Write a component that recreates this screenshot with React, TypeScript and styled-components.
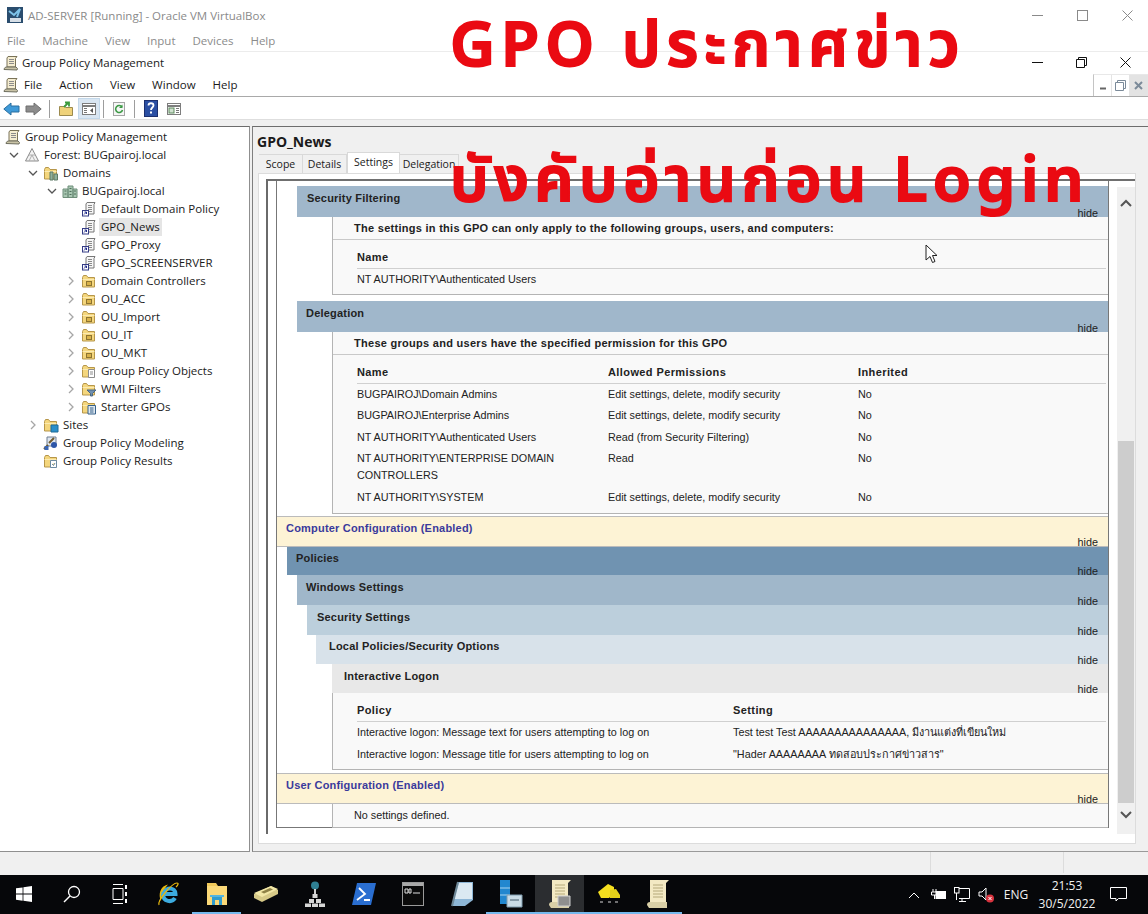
import styled, { createGlobalStyle } from "styled-components";
import { ReactNode } from "react";

const GlobalStyle = createGlobalStyle`
  html, body { margin: 0; padding: 0; background: #fff; }
  * { box-sizing: border-box; }
`;

const Screen = styled.div`
  position: relative;
  width: 1148px;
  height: 914px;
  overflow: hidden;
  display: flex;
  flex-direction: column;
  background: #fff;
  font-family: "Open Sans", "Noto Sans", sans-serif;
  font-size: 11.5px;
  color: #1a1a1a;
`;

const Headline = styled.div<{ $top: number; $spacing: number }>`
  position: absolute;
  left: 450px;
  top: ${(p) => p.$top}px;
  font-family: "Noto Sans", "Noto Sans Thai", "Lato", sans-serif;
  font-size: 62px;
  font-weight: 600;
  line-height: 1.2;
  letter-spacing: ${(p) => p.$spacing}px;
  white-space: nowrap;
  color: #ea0a12;
  -webkit-text-stroke: 2px #ea0a12;
`;

const Pointer = styled.svg`
  position: absolute;
  left: 925px;
  top: 244px;
`;

const TitleBar = styled.div<{ $h: number; $muted?: boolean }>`
  height: ${(p) => p.$h}px;
  display: flex;
  align-items: center;
  padding-left: ${(p) => (p.$muted ? 7 : 3)}px;
  gap: ${(p) => (p.$muted ? 5 : 3)}px;
  color: ${(p) => (p.$muted ? "#8a8a8a" : "#1a1a1a")};
`;

const WinButtons = styled.div<{ $gap: number; $right: number }>`
  margin-left: auto;
  margin-right: ${(p) => p.$right}px;
  display: flex;
  gap: ${(p) => p.$gap}px;
  align-items: center;
`;

const GuestMenu = styled.div`
  height: 22px;
  display: flex;
  gap: 17px;
  align-items: center;
  padding: 0 0 0 7px;
  color: #8b8b8b;
  border-bottom: 1px solid #ececec;
`;

const MenuBar = styled.div`
  height: 24px;
  display: flex;
  align-items: center;
  padding-left: 3px;
  border-bottom: 1px solid #a9a9a9;
`;

const MenuItem = styled.span<{ $first?: boolean }>`
  margin-left: ${(p) => (p.$first ? 5 : 17)}px;
`;

const MdiButtons = styled.div`
  margin-left: auto;
  align-self: flex-end;
  width: 55px;
  height: 22px;
  display: flex;
  border-left: 1px solid #c4c4c4;
  border-top: 1px solid #e8e8e8;
`;

const MdiButton = styled.div<{ $shade?: boolean }>`
  flex: 1;
  display: flex;
  align-items: center;
  justify-content: center;
  border-right: 1px solid #e4e4e4;
  background: ${(p) => (p.$shade ? "#e3e3e3" : "#fff")};
`;

const Toolbar = styled.div`
  height: 23px;
  display: flex;
  align-items: center;
  padding: 1px 0 0 3px;
  border-bottom: 1px solid #dedede;
`;

const ToolButton = styled.div<{ $active?: boolean; $w: number }>`
  width: ${(p) => p.$w}px;
  height: 21px;
  display: flex;
  align-items: center;
  justify-content: center;
  background: ${(p) => (p.$active ? "#d9e6f2" : "transparent")};
  border: 1px solid ${(p) => (p.$active ? "#c3d8ea" : "transparent")};
`;

const ToolSep = styled.div`
  width: 1px;
  height: 18px;
  margin: 0 3px;
  background: #9d9d9d;
`;

const Workspace = styled.div`
  height: 732px;
  padding-top: 6px;
  display: flex;
  gap: 2px;
  background: #f0f0f0;
`;

const TreePane = styled.div`
  width: 250px;
  padding-top: 1px;
  background: #fff;
  border-top: 1px solid #6d6d6d;
  border-right: 1px solid #8f8f8f;
  border-bottom: 1px solid #8f8f8f;
`;

const TreeRow = styled.div<{ $level: number }>`
  height: 18px;
  display: flex;
  align-items: center;
  padding-left: ${(p) => (p.$level === 0 ? 1 : 7 + (p.$level - 1) * 19)}px;
  white-space: nowrap;
`;

const Chevron = styled.span`
  width: 13px;
  height: 18px;
  display: flex;
  align-items: center;
  justify-content: center;
  flex: none;
`;

const NodeIcon = styled.span`
  width: 18px;
  height: 18px;
  margin-left: 3px;
  flex: none;
  display: flex;
  align-items: center;
  justify-content: center;
`;

const NodeLabel = styled.span<{ $selected?: boolean }>`
  margin-left: 1px;
  padding: 0 2px;
  height: 18px;
  line-height: 18px;
  background: ${(p) => (p.$selected ? "#e5e5e5" : "transparent")};
`;

const DetailPane = styled.div`
  flex: 1;
  min-width: 0;
  display: flex;
  flex-direction: column;
  border: 1px solid #9a9a9a;
  border-top-color: #6d6d6d;
  border-left-color: #7f7f7f;
  border-right: none;
`;

const PaneTitle = styled.div`
  height: 26px;
  padding: 5px 0 0 4px;
  font-size: 14px;
  font-weight: 700;
  line-height: 19px;
`;

const Tabs = styled.div`
  height: 20px;
  display: flex;
  align-items: flex-end;
  padding-left: 6px;
`;

const Tab = styled.div<{ $active?: boolean; $w: number }>`
  width: ${(p) => p.$w}px;
  height: ${(p) => (p.$active ? 21 : 19)}px;
  display: flex;
  align-items: ${(p) => (p.$active ? "flex-start" : "center")};
  justify-content: center;
  font-size: 10.5px;
  line-height: 18px;
  background: ${(p) => (p.$active ? "#fff" : "#f0f0f0")};
  border: 1px solid #d9d9d9;
  border-bottom: none;
  border-left: ${(p) => (p.$active ? "1px solid #d9d9d9" : "none")};
`;

const TabBody = styled.div`
  height: 671px;
  margin-left: 5px;
  margin-right: 12px;
  padding: 5px 0 9px 7px;
  display: flex;
  background: #fff;
  border: 1px solid #dcdcdc;
`;

const ReportFrame = styled.div`
  flex: 1;
  min-width: 0;
  overflow: hidden;
  border-top: 2px solid #6f6f6f;
  border-left: 2px solid #6a6a6a;
  padding-left: 8px;
  display: flex;
`;

const Report = styled.div`
  width: 834px;
  height: 647px;
  padding-top: 5px;
  align-self: flex-start;
  border-left: 1px solid #777;
  border-right: 1px solid #777;
  border-bottom: 1px solid #777;
  font-family: "Liberation Sans", Arial, sans-serif;
  font-size: 10.8px;
  color: #222;
`;

const Head = styled.div<{ $indent: number; $bg: string; $h: number; $gap: number; $blue?: boolean; $pt: number; $pl: number }>`
  height: ${(p) => p.$h}px;
  margin-left: ${(p) => p.$indent}px;
  margin-top: ${(p) => p.$gap}px;
  background: ${(p) => p.$bg};
  display: flex;
  justify-content: space-between;
  padding: ${(p) => p.$pt}px 10px 0 ${(p) => p.$pl}px;
  border-top: ${(p) => (p.$blue ? "1px solid #bbb" : "none")};
  border-bottom: ${(p) => (p.$blue ? "1px solid #bbb" : "none")};
`;

const HeadTitle = styled.span<{ $blue?: boolean }>`
  font-weight: 700;
  font-size: 11px;
  line-height: 14px;
  letter-spacing: 0.2px;
  color: ${(p) => (p.$blue ? "#3a3a9c" : "#222")};
`;

const HideLink = styled.span`
  align-self: flex-end;
  margin-bottom: -3px;
  font-size: 10.8px;
  line-height: 13px;
  color: #222;
`;

const Block = styled.div<{ $pb: number }>`
  margin-left: 55px;
  padding-bottom: ${(p) => p.$pb}px;
  background: #f9f9f9;
  border-left: 1px solid #b4b4b4;
  border-bottom: 1px solid #b4b4b4;
`;

const Intro = styled.div`
  height: 23px;
  padding: 4px 0 0 21px;
  font-size: 11px;
  font-weight: 700;
  line-height: 14px;
  letter-spacing: 0.28px;
  border-bottom: 1px solid #c9c9c9;
`;

const TableHead = styled.div<{ $cols: string }>`
  display: grid;
  grid-template-columns: ${(p) => p.$cols};
  margin: 0 2px 0 24px;
  padding: 10px 0 4px;
  font-size: 11px;
  font-weight: 700;
  line-height: 14px;
  letter-spacing: 0.4px;
  border-bottom: 1px solid #d0d0d0;
`;

const TableRow = styled.div<{ $cols: string }>`
  display: grid;
  grid-template-columns: ${(p) => p.$cols};
  margin: 0 2px 0 24px;
  padding: 2px 0 2.5px;
  line-height: 17px;
`;

const NameCell = styled.span`
  padding-right: 22px;
`;

const PlainText = styled.div`
  height: 23px;
  padding: 4px 0 0 21px;
  line-height: 14px;
`;

const ScrollBar = styled.div`
  width: 18px;
  margin-left: 8px;
  margin-top: 6px;
  background: #f0f0f0;
  display: flex;
  flex-direction: column;
  align-items: center;
`;

const ScrollArrow = styled.div<{ $h: number }>`
  height: ${(p) => p.$h}px;
  display: flex;
  align-items: center;
  justify-content: center;
`;

const ScrollSpace = styled.div`
  height: 222px;
`;

const ScrollThumb = styled.div`
  width: 16px;
  height: 362px;
  background: #cdcdcd;
`;

const StatusBar = styled.div`
  height: 23px;
  display: flex;
  justify-content: flex-end;
  background: #f0f0f0;
  padding-bottom: 2px;
`;

const StatusCell = styled.div<{ $w: number }>`
  width: ${(p) => p.$w}px;
  border-left: 1px solid #dcdcdc;
`;

const Taskbar = styled.div`
  height: 39px;
  display: flex;
  align-items: stretch;
  background: #06070a;
  color: #f2f2f2;
`;

const TaskButton = styled.div<{ $active?: boolean; $open?: boolean; $w?: number }>`
  width: ${(p) => p.$w ?? 49}px;
  flex: none;
  display: flex;
  align-items: center;
  justify-content: center;
  background: ${(p) => (p.$active ? "#2b2d30" : "transparent")};
  border-bottom: 2px solid ${(p) => (p.$open ? "#76b9ed" : "transparent")};
`;

const Tray = styled.div`
  margin-left: auto;
  display: flex;
  align-items: center;
`;

const TrayIcon = styled.span`
  width: 24px;
  display: flex;
  justify-content: center;
`;

const TrayLang = styled.span`
  width: 36px;
  text-align: center;
  font-size: 12px;
`;

const Clock = styled.div`
  width: 66px;
  text-align: center;
  font-size: 12px;
  line-height: 18px;
`;

const Notify = styled.div`
  width: 48px;
  padding-right: 12px;
  display: flex;
  justify-content: center;
`;

/* ---- drawings ---- */

const Svg = ({ w = 16, h = 16, children }: { w?: number; h?: number; children: ReactNode }) => (
  <svg width={w} height={h} viewBox={`0 0 ${w} ${h}`} fill="none">
    {children}
  </svg>
);

const WinMin = ({ c }: { c: string }) => (
  <Svg w={11} h={11}><path d="M0 5.5h11" stroke={c} /></Svg>
);
const WinMax = ({ c }: { c: string }) => (
  <Svg w={11} h={11}><rect x=".5" y=".5" width="10" height="10" stroke={c} /></Svg>
);
const WinRestore = ({ c }: { c: string }) => (
  <Svg w={11} h={11}><path d="M.5 2.5h8v8h-8zM2.5 2.5v-2h8v8h-2" stroke={c} /></Svg>
);
const WinClose = ({ c }: { c: string }) => (
  <Svg w={11} h={11}><path d="M.5.5l10 10M10.5.5l-10 10" stroke={c} /></Svg>
);

const Scroll = () => (
  <Svg>
    <path d="M5 1.500h9l-1.500 2V12H4V3z" fill="#f5edd0" stroke="#7a7358" />
    <path d="M6 4.500h5M6 6.500h5M6 8.500h5" stroke="#8c8c8c" />
    <path d="M1 14.500c0-2 2-2.500 3-2.500h9l1.500 1.500-.5 1.500z" fill="#c9c3a6" stroke="#6e6e5e" />
  </Svg>
);

const VboxLogo = () => (
  <Svg>
    <rect width="16" height="16" fill="#2a4d6e" />
    <path d="M2 4l5 4 6-6-3 8" stroke="#7fc4ea" strokeWidth="2" />
    <rect x="3" y="11" width="11" height="4" fill="#d6dee6" />
  </Svg>
);

const Folder = ({ badge }: { badge?: ReactNode }) => (
  <Svg>
    <path d="M1.500 4.500V14h12V4.500H7L5.500 2.500h-3z" fill="#f4d67d" stroke="#b6964a" />
    <path d="M1.500 6.500h12" stroke="#fbeab1" />
    {badge}
  </Svg>
);

const OuBadge = <rect x="5.500" y="8.500" width="5" height="4" fill="#d9b24a" stroke="#8d7430" />;
const DocBadge = <path d="M7.500 6.500h6v8h-6zM9 9h3M9 11h3" fill="#fff" stroke="#8c8c8c" />;
const FilterBadge = <path d="M6 9h9l-3.500 3.500V15h-2v-2.500z" fill="#6f8fae" stroke="#4a6680" />;
const StarterBadge = <path d="M7 6.500h7.500v8.500H7zM9 9h3.500M9 11h3.500M9 13h3.500" fill="#dfe8f0" stroke="#35608a" />;
const SiteBadge = <path d="M8 8h7v7H8z" fill="#2a8fc9" stroke="#1d6b98" />;
const ResultBadge = <path d="M7.500 7.500h6v7h-6zM9 11l1.500 1.500L12 10" fill="#fff" stroke="#6d8aa3" />;
const DomainsBadge = <path d="M7 7h3v8H7zM11 9h3.500v6H11z" fill="#8fb09a" stroke="#5d7a66" />;

const Forest = () => (
  <Svg>
    <path d="M8 1.500L14.500 14h-13z" fill="#f2f2f2" stroke="#8b8b8b" />
    <path d="M5 8h6M8 8l-3 6M8 8l3 6" stroke="#aeaeae" />
  </Svg>
);

const Domain = () => (
  <Svg>
    <path d="M1 6h5v8.500H1zM6 3h5v11.500H6zM11 6h4v8.500h-4z" fill="#a9c7b2" stroke="#6f8e7a" />
    <path d="M2.500 8h2M2.500 11h2M7.500 5.500h2M7.500 8.500h2M7.500 11.500h2M12 8h2M12 11h2" stroke="#4f6f5b" />
  </Svg>
);

const Gpo = () => (
  <Svg>
    <path d="M6 1.500h8l-1 2V13H5V3z" fill="#f6f6f6" stroke="#777" />
    <path d="M7 4.500h4M7 6.500h4M7 8.500h4M7 10.500h4" stroke="#8a8a8a" />
    <rect x="1.500" y="9.500" width="6" height="5.500" fill="#fff" stroke="#353c85" />
    <path d="M3 13.500l2.500-2.500M3.500 11h2v2" stroke="#1f2a8a" />
  </Svg>
);

const Modeling = () => (
  <Svg>
    <path d="M4 2h9v9H4z" fill="#dfe6ef" stroke="#6e7f94" />
    <path d="M1 14l4-4M6 8l5-5" stroke="#6f5a2c" strokeWidth="2" />
    <circle cx="11" cy="10" r="3" fill="#2d56a8" />
    <path d="M1.500 11h4v4h-4z" fill="#3b66b5" />
  </Svg>
);

const ChevronDown = () => (
  <Svg w={10} h={10}><path d="M1 3l4 4 4-4" stroke="#555" strokeWidth="1.300" /></Svg>
);
const ChevronRight = () => (
  <Svg w={10} h={10}><path d="M3 1l4 4-4 4" stroke="#a6a6a6" strokeWidth="1.300" /></Svg>
);

const Arrow = ({ color, edge, flip }: { color: string; edge: string; flip?: boolean }) => (
  <svg width="17" height="14" viewBox="0 0 17 14" style={flip ? { transform: "scaleX(-1)" } : undefined}>
    <path d="M.800 7L8 1v3h8v6H8v3z" fill={color} stroke={edge} />
  </svg>
);

const UpFolder = () => (
  <Svg>
    <path d="M1.500 5.500V14.500h13V6.500H8L6.500 5.500z" fill="#efd27a" stroke="#9c8a4e" />
    <path d="M6 6l4-4M7 1.500h4v4" stroke="#3c9a3c" strokeWidth="1.800" />
  </Svg>
);

const PaneIcon = ({ right }: { right?: boolean }) => (
  <Svg>
    <rect x="1.500" y="2.500" width="13" height="11" fill="#fff" stroke="#7d7d7d" />
    <path d="M1.500 5h13" stroke="#7d7d7d" strokeWidth="2" />
    {right ? (
      <>
        <rect x="3" y="7" width="5" height="5" fill="#cfe0cf" stroke="#5c8a5c" />
        <path d="M10 7.500h3M10 9.500h3M10 11.500h3" stroke="#777" />
      </>
    ) : (
      <>
        <path d="M3 7.500h3M3 9.500h3M3 11.500h3" stroke="#777" />
        <path d="M12 7l-3 2.500 3 2.500z" fill="#555" />
      </>
    )}
  </Svg>
);

const Refresh = () => (
  <Svg>
    <rect x="2.500" y="1.500" width="11" height="13" fill="#f6f6f6" stroke="#a5a5a5" />
    <path d="M11 6a3.500 3.500 0 1 0 .5 3" stroke="#3d9a46" strokeWidth="1.600" />
    <path d="M11.500 3.500V7H8z" fill="#3d9a46" />
  </Svg>
);

const HelpBook = () => (
  <svg width="14" height="17" viewBox="0 0 14 17">
    <rect x=".5" y=".5" width="13" height="16" fill="#2b4fa3" stroke="#1c2f6e" />
    <path d="M4.500 5.500c0-3 5-3 5 0 0 2-2.500 2-2.500 4.500" fill="none" stroke="#fff" strokeWidth="1.800" />
    <rect x="6" y="11.500" width="2" height="2" fill="#fff" />
  </svg>
);

const WindowsLogo = () => (
  <svg width="16" height="16" viewBox="0 0 16 16" fill="#fff">
    <path d="M0 2.300L6.600 1.400V7.600H0zM7.400 1.300L16 0v7.600H7.400zM0 8.400h6.600v6.300L0 13.700zM7.400 8.400H16V16l-8.600-1.200z" />
  </svg>
);

const SearchGlass = () => (
  <Svg w={18} h={18}>
    <circle cx="11" cy="7" r="5.500" stroke="#fff" strokeWidth="1.300" />
    <path d="M7 11l-6 6" stroke="#fff" strokeWidth="1.500" />
  </Svg>
);

const TaskView = () => (
  <Svg w={16} h={20}>
    <path d="M1 .5h10M1 19.500h10M1 4.500h10v11H1z" stroke="#fff" />
    <path d="M14 1v4M14 8v4M14 15v4" stroke="#fff" strokeWidth="2" />
  </Svg>
);

const IeLogo = () => (
  <svg width="24" height="26" viewBox="0 0 24 26">
    <path d="M5 20C2 14 4 5 12 3.500 8 8 5 14 5 20z" fill="#e9b90f" />
    <path d="M5.500 13h14c0-7-10-7-11.500-1M7 13c0 8 9 9 12 4" fill="none" stroke="#3cabe0" strokeWidth="4" />
    <path d="M3 24C1 20 16 2 21 2c2 0 1 2-1 4" fill="none" stroke="#e9b90f" strokeWidth="1.200" />
  </svg>
);

const ExplorerIcon = () => (
  <svg width="22" height="24" viewBox="0 0 22 24">
    <path d="M1 1h9l2 3H1z" fill="#f0c85a" />
    <path d="M1 4h20v19H1z" fill="#fad878" />
    <path d="M6 23v-8h10v8h-3v-5H9v5z" fill="#2f9ccf" />
    <path d="M4 13h14v2H4z" fill="#54b5e0" />
  </svg>
);

const Drive = () => (
  <svg width="26" height="20" viewBox="0 0 26 20">
    <path d="M1 10l17-8 7 4v4L9 18 1 14z" fill="#d6c987" />
    <path d="M1 9l17-7 7 3-16 8z" fill="#f2e7a6" />
    <path d="M8 8l9-4 3 1.500-9 4z" fill="#8f8247" />
  </svg>
);

const AdTree = () => (
  <svg width="20" height="26" viewBox="0 0 20 26">
    <circle cx="10" cy="4.500" r="4" fill="#2f7f93" />
    <path d="M10 8v6" stroke="#cfcfcf" strokeWidth="2" />
    <path d="M7.500 13h5v4h-5zM4 18h5v4H4zM11 18h5v4h-5zM0 22.500h6v3.500H0zM7 22.500h6v3.500H7zM14 22.500h6v3.500h-6z" fill="#d6d6d6" />
  </svg>
);

const PowerShell = () => (
  <svg width="24" height="24" viewBox="0 0 24 24">
    <path d="M5 1h19l-5 22H0z" fill="#2a6ed0" />
    <path d="M7 6l6 6-8 6M12 18h6" fill="none" stroke="#fff" strokeWidth="1.800" />
  </svg>
);

const Cmd = () => (
  <svg width="22" height="24" viewBox="0 0 22 24">
    <rect x=".5" y=".5" width="21" height="23" fill="#0b0b0b" stroke="#9a9a9a" />
    <rect x="1" y="1" width="20" height="3" fill="#a9a9a9" />
    <path d="M3 7h3v4H3zM7 7h2v4H7zM11 11h7" stroke="#e0e0e0" fill="none" />
  </svg>
);

const Notepad = () => (
  <svg width="22" height="26" viewBox="0 0 22 26">
    <path d="M7 1h15v18L14 25H1z" fill="#8db6d6" />
    <path d="M8 2h13v16H3z" fill="#dbe9f2" />
    <path d="M1 25l6-24" stroke="#6d8797" strokeWidth="2" />
  </svg>
);

const ServerFolder = () => (
  <svg width="24" height="28" viewBox="0 0 24 28">
    <rect x="1" y="0" width="10" height="24" fill="#2287cf" />
    <path d="M1 8h10M1 15h10" stroke="#a6d4f0" />
    <path d="M8 15h15v12H8z" fill="#c9dbe6" stroke="#7f9cae" />
    <path d="M11 20h9" stroke="#405868" />
  </svg>
);

const BigScroll = ({ doc }: { doc?: boolean }) => (
  <svg width="22" height="28" viewBox="0 0 22 28">
    <path d="M3 0h19l-3 3v22H3z" fill="#f3e9c3" />
    <path d="M6 5h10M6 8h10M6 11h10M6 14h10M6 17h10" stroke="#b5a97a" />
    <path d="M0 25c0-2 1-3 3-3h17v6H2z" fill="#d9cfa6" />
    {doc ? <path d="M9 16h12v10H9z" fill="#8f8f8f" stroke="#cfcfcf" /> : null}
  </svg>
);

const Bulldozer = () => (
  <svg width="26" height="26" viewBox="0 0 26 26">
    <path d="M2 11l10-8 6 3v6l-5 5H5z" fill="#f5df1f" />
    <path d="M14 9l6-1 4 6v3H14z" fill="#e5d11a" />
    <path d="M4 21h3M12 21h3M19 21h3" stroke="#d8d8d8" />
  </svg>
);

const TrayBattery = () => (
  <Svg w={16} h={11}>
    <path d="M3 0v3M6 0v3M1.500 3h6v3h-6zM4.500 6v4" stroke="#fff" />
    <rect x="6" y="2.500" width="9.500" height="7" fill="#fff" stroke="#fff" />
  </Svg>
);

const TrayNet = () => (
  <Svg>
    <path d="M5 1.500h10.500v10H5M8 11.500v3M5 14.500h7" stroke="#fff" />
    <rect x=".5" y=".5" width="4.500" height="5.500" stroke="#fff" fill="#06070a" />
    <path d="M2.500 6v7" stroke="#fff" />
  </Svg>
);

const TrayMute = () => (
  <svg width="17" height="18" viewBox="0 0 17 18" fill="none">
    <path d="M1 6h3l4-4v12l-4-4H1z" stroke="#fff" />
    <circle cx="12" cy="12.500" r="4" fill="#d9343f" />
    <path d="M10.500 11l3 3M13.500 11l-3 3" stroke="#fff" />
  </svg>
);

const NotifyIcon = () => (
  <Svg w={17} h={15}><path d="M.5.5h16v11h-8l-2.500 2.500V11.500H.5z" stroke="#fff" /></Svg>
);

/* ---- data ---- */

type Node = { label: string; level: number; open?: boolean; leaf?: boolean; selected?: boolean; icon: ReactNode };

const tree: Node[] = [
  { label: "Group Policy Management", level: 0, icon: <Scroll /> },
  { label: "Forest: BUGpairoj.local", level: 1, open: true, icon: <Forest /> },
  { label: "Domains", level: 2, open: true, icon: <Folder badge={DomainsBadge} /> },
  { label: "BUGpairoj.local", level: 3, open: true, icon: <Domain /> },
  { label: "Default Domain Policy", level: 4, leaf: true, icon: <Gpo /> },
  { label: "GPO_News", level: 4, leaf: true, selected: true, icon: <Gpo /> },
  { label: "GPO_Proxy", level: 4, leaf: true, icon: <Gpo /> },
  { label: "GPO_SCREENSERVER", level: 4, leaf: true, icon: <Gpo /> },
  { label: "Domain Controllers", level: 4, icon: <Folder badge={OuBadge} /> },
  { label: "OU_ACC", level: 4, icon: <Folder badge={OuBadge} /> },
  { label: "OU_Import", level: 4, icon: <Folder badge={OuBadge} /> },
  { label: "OU_IT", level: 4, icon: <Folder badge={OuBadge} /> },
  { label: "OU_MKT", level: 4, icon: <Folder badge={OuBadge} /> },
  { label: "Group Policy Objects", level: 4, icon: <Folder badge={DocBadge} /> },
  { label: "WMI Filters", level: 4, icon: <Folder badge={FilterBadge} /> },
  { label: "Starter GPOs", level: 4, icon: <Folder badge={StarterBadge} /> },
  { label: "Sites", level: 2, icon: <Folder badge={SiteBadge} /> },
  { label: "Group Policy Modeling", level: 2, leaf: true, icon: <Modeling /> },
  { label: "Group Policy Results", level: 2, leaf: true, icon: <Folder badge={ResultBadge} /> },
];

const delegationCols = "251px 250px 1fr";
const delegation = [
  ["BUGPAIROJ\\Domain Admins", "Edit settings, delete, modify security", "No"],
  ["BUGPAIROJ\\Enterprise Admins", "Edit settings, delete, modify security", "No"],
  ["NT AUTHORITY\\Authenticated Users", "Read (from Security Filtering)", "No"],
  ["NT AUTHORITY\\ENTERPRISE DOMAIN CONTROLLERS", "Read", "No"],
  ["NT AUTHORITY\\SYSTEM", "Edit settings, delete, modify security", "No"],
];

const policyCols = "376px 1fr";
const policies = [
  ["Interactive logon: Message text for users attempting to log on", "Test test Test AAAAAAAAAAAAAAA, มีงานแต่งที่เขียนใหม่"],
  ["Interactive logon: Message title for users attempting to log on", "\"Hader AAAAAAAA ทดสอบประกาศข่าวสาร\""],
];

const taskIcons = [
  { icon: <IeLogo /> },
  { icon: <ExplorerIcon />, open: true },
  { icon: <Drive /> },
  { icon: <AdTree /> },
  { icon: <PowerShell /> },
  { icon: <Cmd /> },
  { icon: <Notepad /> },
  { icon: <ServerFolder />, open: true },
  { icon: <BigScroll doc />, open: true, active: true },
  { icon: <Bulldozer />, open: true },
  { icon: <BigScroll />, open: true },
];

type SectionProps = { title: string; indent: number; bg: string; h: number; gap?: number; blue?: boolean; pt?: number; pl?: number };

function Section({ title, indent, bg, h, gap = 0, blue, pt = 5, pl = 9 }: SectionProps) {
  return (
    <Head $indent={indent} $bg={bg} $h={h} $gap={gap} $blue={blue} $pt={pt} $pl={pl}>
      <HeadTitle $blue={blue}>{title}</HeadTitle>
      <HideLink>hide</HideLink>
    </Head>
  );
}

export default function App() {
  return (
    <Screen>
      <GlobalStyle />
      <TitleBar $h={30} $muted>
        <VboxLogo />
        AD-SERVER [Running] - Oracle VM VirtualBox
        <WinButtons $gap={34} $right={15}>
          <WinMin c="#8a8a8a" />
          <WinMax c="#8a8a8a" />
          <WinClose c="#8a8a8a" />
        </WinButtons>
      </TitleBar>
      <GuestMenu>
        <span>File</span>
        <span>Machine</span>
        <span>View</span>
        <span>Input</span>
        <span>Devices</span>
        <span>Help</span>
      </GuestMenu>
      <TitleBar $h={21}>
        <Scroll />
        Group Policy Management
        <WinButtons $gap={33} $right={17}>
          <WinMin c="#111" />
          <WinRestore c="#111" />
          <WinClose c="#111" />
        </WinButtons>
      </TitleBar>
      <MenuBar>
        <Scroll />
        <MenuItem $first>File</MenuItem>
        <MenuItem>Action</MenuItem>
        <MenuItem>View</MenuItem>
        <MenuItem>Window</MenuItem>
        <MenuItem>Help</MenuItem>
        <MdiButtons>
          <MdiButton>
            <Svg w={8} h={8}><path d="M1 6.500h6" stroke="#666" strokeWidth="2" /></Svg>
          </MdiButton>
          <MdiButton>
            <WinRestore c="#7b8a99" />
          </MdiButton>
          <MdiButton $shade>
            <Svg w={9} h={9}><path d="M1 1l7 7M8 1L1 8" stroke="#7b8a99" strokeWidth="2" /></Svg>
          </MdiButton>
        </MdiButtons>
      </MenuBar>
      <Toolbar>
        <Arrow color="#3f9ad8" edge="#2b6f9f" />
        <ToolButton $w={26}><Arrow color="#8c8c8c" edge="#6f6f6f" flip /></ToolButton>
        <ToolSep />
        <ToolButton $w={25}><UpFolder /></ToolButton>
        <ToolButton $w={22} $active><PaneIcon /></ToolButton>
        <ToolSep />
        <ToolButton $w={24}><Refresh /></ToolButton>
        <ToolSep />
        <ToolButton $w={25}><HelpBook /></ToolButton>
        <ToolButton $w={21}><PaneIcon right /></ToolButton>
      </Toolbar>
      <Workspace>
        <TreePane>
          {tree.map((n) => (
            <TreeRow key={n.label} $level={n.level}>
              {n.level > 0 ? <Chevron>{n.leaf ? null : n.open ? <ChevronDown /> : <ChevronRight />}</Chevron> : null}
              <NodeIcon>{n.icon}</NodeIcon>
              <NodeLabel $selected={n.selected}>{n.label}</NodeLabel>
            </TreeRow>
          ))}
        </TreePane>
        <DetailPane>
          <PaneTitle>GPO_News</PaneTitle>
          <Tabs>
            <Tab $w={44}>Scope</Tab>
            <Tab $w={44}>Details</Tab>
            <Tab $w={53} $active>Settings</Tab>
            <Tab $w={59}>Delegation</Tab>
          </Tabs>
          <TabBody>
            <ReportFrame>
              <Report>
                <Section title="Security Filtering" indent={20} bg="#a0b7cb" h={31} pl={10} />
                <Block $pb={3}>
                  <Intro>The settings in this GPO can only apply to the following groups, users, and computers:</Intro>
                  <TableHead $cols="1fr"><span>Name</span></TableHead>
                  <TableRow $cols="1fr"><span>NT AUTHORITY\Authenticated Users</span></TableRow>
                </Block>
                <Section title="Delegation" indent={20} bg="#a0b7cb" h={31} gap={6} />
                <Block $pb={5}>
                  <Intro>These groups and users have the specified permission for this GPO</Intro>
                  <TableHead $cols={delegationCols}>
                    <span>Name</span>
                    <span>Allowed Permissions</span>
                    <span>Inherited</span>
                  </TableHead>
                  {delegation.map((r) => (
                    <TableRow key={r[0]} $cols={delegationCols}>
                      <NameCell>{r[0]}</NameCell>
                      <span>{r[1]}</span>
                      <span>{r[2]}</span>
                    </TableRow>
                  ))}
                </Block>
                <Section title="Computer Configuration (Enabled)" indent={0} bg="#fdf3d5" h={31} gap={2} blue pt={4} />
                <Section title="Policies" indent={10} bg="#7093b1" h={28} pt={4} />
                <Section title="Windows Settings" indent={20} bg="#a0b7ca" h={30} />
                <Section title="Security Settings" indent={30} bg="#bccfdc" h={30} pl={10} />
                <Section title="Local Policies/Security Options" indent={39} bg="#d8e2ea" h={29} pt={4} pl={13} />
                <Section title="Interactive Logon" indent={55} bg="#e8e8e8" h={29} pl={12} />
                <Block $pb={4}>
                  <TableHead $cols={policyCols}>
                    <span>Policy</span>
                    <span>Setting</span>
                  </TableHead>
                  {policies.map((r) => (
                    <TableRow key={r[0]} $cols={policyCols}>
                      <span>{r[0]}</span>
                      <span>{r[1]}</span>
                    </TableRow>
                  ))}
                </Block>
                <Section title="User Configuration (Enabled)" indent={0} bg="#fdf3d5" h={31} gap={3} blue pt={4} />
                <Block $pb={0}>
                  <PlainText>No settings defined.</PlainText>
                </Block>
              </Report>
              <ScrollBar>
                <ScrollArrow $h={32}>
                  <Svg w={12} h={8}><path d="M1 7l5-5 5 5" stroke="#555" strokeWidth="2" /></Svg>
                </ScrollArrow>
                <ScrollSpace />
                <ScrollThumb />
                <ScrollArrow $h={24}>
                  <Svg w={12} h={8}><path d="M1 1l5 5 5-5" stroke="#555" strokeWidth="2" /></Svg>
                </ScrollArrow>
              </ScrollBar>
            </ReportFrame>
          </TabBody>
        </DetailPane>
      </Workspace>
      <StatusBar>
        <StatusCell $w={133} />
        <StatusCell $w={85} />
      </StatusBar>
      <Taskbar>
        <TaskButton $w={47}><WindowsLogo /></TaskButton>
        <TaskButton><SearchGlass /></TaskButton>
        <TaskButton $w={47}><TaskView /></TaskButton>
        {taskIcons.map((t, i) => (
          <TaskButton key={i} $open={t.open} $active={t.active}>{t.icon}</TaskButton>
        ))}
        <Tray>
          <TrayIcon>
            <Svg w={12} h={8}><path d="M1 7l5-5 5 5" stroke="#fff" /></Svg>
          </TrayIcon>
          <TrayIcon><TrayBattery /></TrayIcon>
          <TrayIcon><TrayNet /></TrayIcon>
          <TrayIcon><TrayMute /></TrayIcon>
          <TrayLang>ENG</TrayLang>
          <Clock>21:53<br />30/5/2022</Clock>
          <Notify><NotifyIcon /></Notify>
        </Tray>
      </Taskbar>
      <Headline $top={5} $spacing={6}>GPO ประกาศข่าว</Headline>
      <Headline $top={140} $spacing={5.5}>บังคับอ่านก่อน Login</Headline>
      <Pointer width="13" height="20" viewBox="0 0 13 20">
        <path d="M1 1v15l4-3.500 2.500 6 2.500-1-2.500-6H12z" fill="#fff" stroke="#222" />
      </Pointer>
    </Screen>
  );
}
